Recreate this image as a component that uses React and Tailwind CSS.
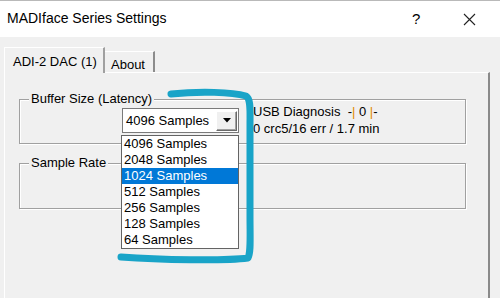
import React from "react";

const font = { fontFamily: '"Liberation Sans", Arial, sans-serif' };

function GroupBox({ label, className = "", children }) {
  return (
    <div className={"relative border border-[#a0a0a0] shadow-[1px_1px_0_#ffffff,inset_1px_1px_0_#ffffff] " + className}>
      <span className="absolute left-[9px] top-[-9px] bg-[#f0f0f0] px-[2px] text-[13px] leading-[16px] text-black">
        {label}
      </span>
      {children}
    </div>
  );
}

const items = [
  "4096 Samples",
  "2048 Samples",
  "1024 Samples",
  "512 Samples",
  "256 Samples",
  "128 Samples",
  "64 Samples",
];

export default function App() {
  return (
    <div className="relative w-[500px] h-[298px] overflow-hidden bg-[#f0f0f0] text-black" style={font}>
      {/* Title bar */}
      <div className="h-[37px] bg-white border-t border-[#b9b9b9] flex items-center pl-[7px] pr-[24px]">
        <span className="text-[14px] flex-1 pb-[1px]">MADIface Series Settings</span>
        <span className="text-[15px] w-[8px] mr-[43px]">?</span>
        <svg width="13" height="13" viewBox="0 0 13 13" className="mt-[1px]">
          <path d="M1 1 L12 12 M12 1 L1 12" stroke="#222" strokeWidth="1.1" />
        </svg>
      </div>

      {/* Body */}
      <div className="pt-[10px] pl-[4px] pr-[10px]">
        {/* Tabs */}
        <div className="flex items-end h-[25px] relative z-10">
          <div className="h-[26px] w-[101px] bg-[#f0f0f0] border-l border-t border-white border-r-2 border-r-[#a0a0a0] rounded-tl-[1px] pl-[8px] pt-[4px] text-[13px] mb-[-1px]">
            ADI-2 DAC (1)
          </div>
          <div className="h-[21px] w-[50px] bg-[#f0f0f0] border-t border-white border-r-2 border-r-[#8c8c8c] pl-[6px] pt-[3px] text-[13px]">
            About
          </div>
        </div>
        {/* Panel */}
        <div className="h-[240px] border-t border-l border-white border-r-2 border-r-[#8a8a8a] pl-[14px] pr-[22px] pt-[26px]">
          <GroupBox label="Buffer Size (Latency)" className="h-[45px]">
            <div className="flex pl-[102px] pt-[8px]">
              <div className="w-[117px] h-[25px] bg-white border border-[#7a7a7a] flex items-center justify-between pl-[3px] pr-[1px]">
                <span className="text-[13px]">4096 Samples</span>
                <div className="w-[21px] h-[20px] bg-[#f0f0f0] border-t border-l border-white border-r border-b border-r-[#696969] border-b-[#696969] shadow-[inset_-1px_-1px_0_#a0a0a0] flex items-center justify-center">
                  <svg width="8" height="5" viewBox="0 0 8 5">
                    <path d="M0 0 H8 L4 4.5 Z" fill="#000" />
                  </svg>
                </div>
              </div>
              <div className="pl-[14px] mt-[-5px] text-[13px] leading-[17px]">
                <div>
                  USB Diagnosis&nbsp; -<span className="text-[#e08a00]">|</span> 0 <span className="text-[#e08a00]">|</span>-
                </div>
                <div>0 crc5/16 err / 1.7 min</div>
              </div>
            </div>
          </GroupBox>
          <GroupBox label="Sample Rate" className="h-[46px] mt-[19px]" />
        </div>
      </div>

      {/* Dropdown list overlay */}
      <div className="absolute left-[121px] top-[135px] w-[118px] bg-white border border-[#646464] z-20">
        {items.map((t, i) => (
          <div
            key={t}
            className={
              "h-[16px] leading-[16px] pl-[2px] text-[13px] " +
              (i === 2 ? "bg-[#0078d7] text-white" : "text-black")
            }
          >
            {t}
          </div>
        ))}
      </div>

      {/* Marker annotation */}
      <svg className="absolute left-0 top-0 z-30 pointer-events-none" width="500" height="298" viewBox="0 0 500 298">
        <path
          d="M171 94 C 200 91, 232 92, 246 96 C 251 99, 250 110, 250 125 L 250 215 C 250 240, 251 252, 248 258 C 225 261, 160 260, 121 257"
          fill="none"
          stroke="#19a4c8"
          strokeWidth="7"
          strokeLinecap="round"
          strokeLinejoin="round"
        />
      </svg>
    </div>
  );
}
